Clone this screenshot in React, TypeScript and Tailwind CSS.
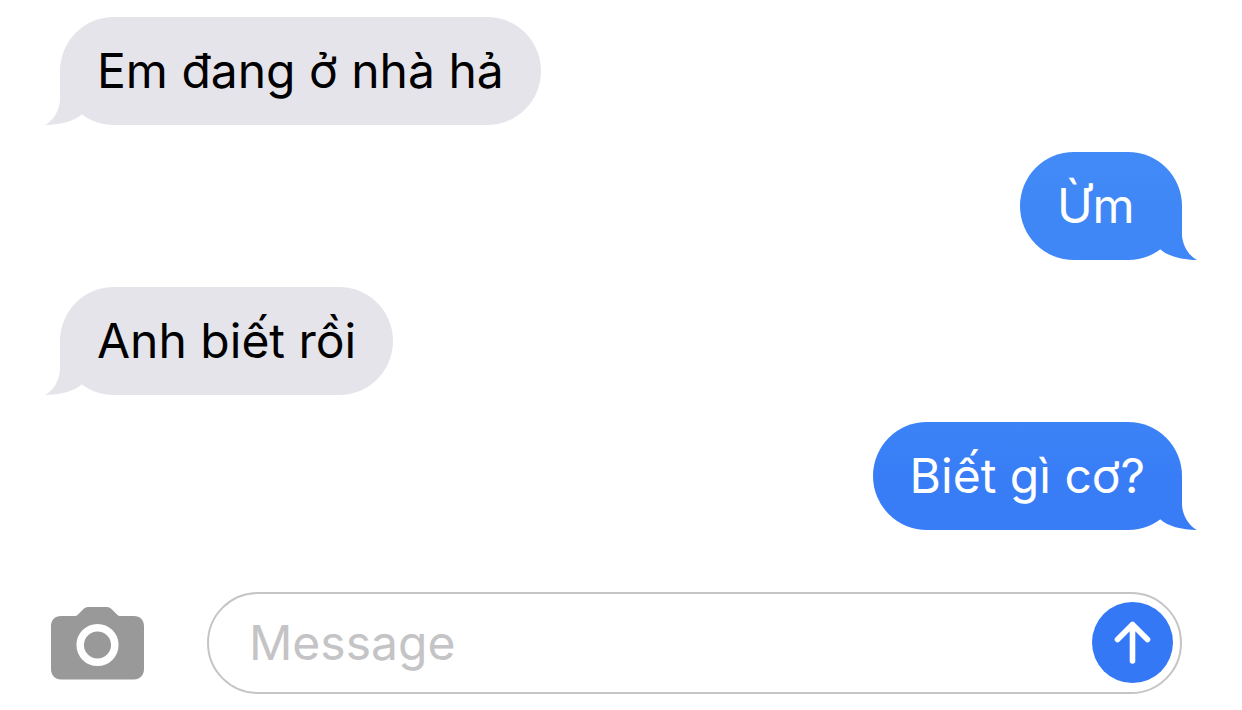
import { useState, FormEvent } from "react";

type Message = {
  text: string;
  sent: boolean;
  color: string;
  tail: string;
};

const messages: Message[] = [
  {
    text: "Em đang ở nhà hả",
    sent: false,
    color: "bg-[#e5e4ea] text-black",
    tail: "text-[#e5e4ea]",
  },
  {
    text: "Ừm",
    sent: true,
    color: "bg-linear-to-b from-[#428bf7] to-[#3f87f6] to-50% text-white",
    tail: "text-[#3f87f6]",
  },
  {
    text: "Anh biết rồi",
    sent: false,
    color: "bg-[#e5e4ea] text-black",
    tail: "text-[#e5e4ea]",
  },
  {
    text: "Biết gì cơ?",
    sent: true,
    color: "bg-linear-to-b from-[#3c83f6] to-[#387df6] to-50% text-white",
    tail: "text-[#387df6]",
  },
];

function Tail({ className }: { className: string }) {
  return (
    <svg
      viewBox="0 0 40 54"
      fill="currentColor"
      aria-hidden="true"
      className={"absolute bottom-0 w-10 h-[54px] " + className}
    >
      <path d="M15 0V28C15 39 8 50 0 54C15 54 30 50 37 43L38 20Z" />
    </svg>
  );
}

function Bubble({ message }: { message: Message }) {
  return (
    <li
      className={
        "relative min-w-[162px] max-w-[75%] rounded-[54px] px-[37px] py-6 text-5xl leading-[60px] " +
        (message.sent ? "self-end " : "self-start ") +
        message.color
      }
    >
      <Tail
        className={
          message.tail +
          (message.sent ? " -right-[15px] -scale-x-100" : " -left-[15px]")
        }
      />
      <span className="relative">{message.text}</span>
    </li>
  );
}

function CameraIcon() {
  return (
    <svg viewBox="0 0 93 73" className="w-[93px] h-[73px]" aria-hidden="true">
      <path
        fill="#999999"
        d="M10 9H23C25 9 26 8.400 27 7.400L32 2.500C33.500 1 35 0 37 0H56C58 0 59.500 1 61 2.500L66 7.400C67 8.400 68 9 70 9H83C89 9 93 13 93 19V62C93 68 89 72.500 83 72.500H10C4 72.500 0 68 0 62V19C0 13 4 9 10 9Z"
      />
      <circle
        cx="46.500"
        cy="38"
        r="17.300"
        fill="none"
        stroke="white"
        strokeWidth="7.500"
      />
    </svg>
  );
}

export default function App() {
  const [draft, setDraft] = useState("");

  function send(e: FormEvent) {
    e.preventDefault();
    setDraft("");
  }

  return (
    <main className="min-h-screen bg-white px-[60px] pt-[17px] font-['Inter','Liberation_Sans',sans-serif]">
      <ul className="flex flex-col gap-[27px]">
        {messages.map((message) => (
          <Bubble key={message.text} message={message} />
        ))}
      </ul>
      <form
        onSubmit={send}
        className="mt-[62px] -ml-[9px] flex items-center gap-[63px]"
      >
        <button type="button" aria-label="Camera" className="shrink-0">
          <CameraIcon />
        </button>
        <div className="flex min-w-0 flex-1 items-center rounded-full border-2 border-[#c5c4c7] pt-2 pb-[9px] pl-10 pr-[7px]">
          <input
            type="text"
            aria-label="Message"
            placeholder="Message"
            value={draft}
            onChange={(e) => setDraft(e.target.value)}
            className="min-w-0 flex-1 bg-transparent text-5xl leading-[60px] outline-none placeholder:text-[#c4c4c6]"
          />
          <button
            type="submit"
            aria-label="Send"
            className="flex size-[81px] shrink-0 items-center justify-center rounded-full bg-[#3478f6]"
          >
            <svg
              viewBox="0 0 81 81"
              fill="none"
              stroke="white"
              strokeWidth="5.600"
              strokeLinecap="round"
              strokeLinejoin="round"
              aria-hidden="true"
              className="size-[81px]"
            >
              <path d="M40.500 59V22.500M25.500 37.500L40.500 22.500L55.500 37.500" />
            </svg>
          </button>
        </div>
      </form>
    </main>
  );
}
